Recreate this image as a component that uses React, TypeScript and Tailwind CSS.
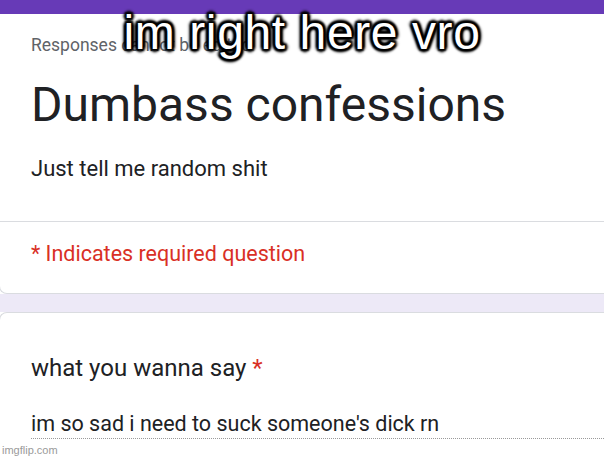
import React from "react";

export default function App() {
  return (
    <div className="relative w-[604px] h-[458px] overflow-hidden bg-white font-['Roboto','Noto_Sans',sans-serif]">
      <div className="flex flex-col">
        {/* header card */}
        <div className="-ml-px -mr-[10px] rounded-b-lg border-b border-l border-[#dadce0] bg-white">
          <div className="h-[14px] bg-[#673ab7]" />
          <div className="pl-[31px]">
            <div className="mt-[21px] text-[17.5px] leading-[20px] text-[#5f6368]">
              Responses cannot be edited
            </div>
            <div className="mt-[22px] text-[48px] leading-[56px] text-[#202124]">
              Dumbass confessions
            </div>
            <div className="mt-[22px] text-[22px] leading-[28px] text-[#202124]">
              Just tell me random shit
            </div>
          </div>
          <div className="mt-[38px] h-px bg-[#dadce0]" />
          <div className="pl-[31px] pb-[25px]">
            <div className="mt-[18px] text-[21.5px] leading-[28px] text-[#d93025]">
              * Indicates required question
            </div>
          </div>
        </div>
        {/* gap */}
        <div className="h-[18px] bg-[#ede9f7]" />
        {/* question card */}
        <div className="-ml-px -mr-[10px] h-[200px] rounded-t-lg border-t border-l border-[#dadce0] bg-white">
          <div className="pl-[31px]">
            <div className="mt-[40px] text-[24px] leading-[30px] text-[#202124]">
              what you wanna say <span className="text-[#d93025]">*</span>
            </div>
            <div className="mt-[27px] border-b border-dotted border-[#9a9a9a] text-[21.5px] leading-[28px] text-[#202124]">
              im so sad i need to suck someone's dick rn
            </div>
          </div>
        </div>
      </div>

      {/* meme caption */}
      <div className="absolute left-0 right-0 top-[9px] text-center font-['Liberation_Sans','Arial',sans-serif] text-[48px] leading-[48px] tracking-[0.6px] text-white [text-shadow:0_0_2px_#000,0_0_2px_#000,2px_2px_2px_#000,-2px_-2px_2px_#000,2px_-2px_2px_#000,-2px_2px_2px_#000,0_3px_3px_#000,0_-3px_3px_#000,3px_0_3px_#000,-3px_0_3px_#000]">
        im right here vro
      </div>

      {/* watermark */}
      <div className="absolute left-[2px] bottom-[2px] font-['Liberation_Sans','Arial',sans-serif] text-[11px] leading-[12px] text-[#9a9a9a]">
        imgflip.com
      </div>
    </div>
  );
}
